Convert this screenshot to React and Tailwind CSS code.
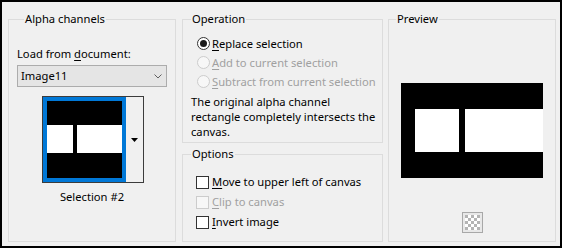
import React from 'react';

const Radio = ({ checked, disabled }) => (
  <span
    className={`w-[13px] h-[13px] rounded-full border flex items-center justify-center shrink-0 ${
      disabled ? 'border-[#cccccc] bg-[#f7f7f7]' : 'border-[#333333] bg-white'
    }`}
  >
    {checked && <span className="w-[7px] h-[7px] rounded-full bg-[#1a1a1a]" />}
  </span>
);

const Check = ({ disabled }) => (
  <span
    className={`w-[13px] h-[13px] border shrink-0 ${
      disabled ? 'border-[#cccccc] bg-[#f7f7f7]' : 'border-[#333333] bg-white'
    }`}
  />
);

const Acc = ({ children }) => <span className="underline underline-offset-[2px] decoration-1">{children}</span>;

const Legend = ({ children, ml = 'ml-[7px]' }) => (
  <legend className={`${ml} px-[1px] leading-[16px]`}>{children}</legend>
);

export default function App() {
  return (
    <div className="w-[562px] h-[248px] border-2 border-black bg-[#f0f0f0] flex pl-[6px] pt-[9px] font-['Noto_Sans',sans-serif] text-[11.2px] text-black whitespace-nowrap">
      {/* Alpha channels */}
      <fieldset className="w-[168px] h-[231px] border border-[#dcdcdc] px-[8px]">
        <Legend>Alpha channels</Legend>
        <div className="mt-[19px] leading-[16px]">
          Load from <Acc>d</Acc>ocument:
        </div>
        <div className="mt-[3px] w-[150px] h-[22px] border border-[#acacac] bg-[#e5e5e5] flex items-center justify-between pl-[3px] pr-[4px]">
          <span className="leading-[16px]">Image11</span>
          <svg width="8" height="5" viewBox="0 0 8 5">
            <polyline points="0.5,0.5 4,4 7.5,0.5" fill="none" stroke="#606060" strokeWidth="1" />
          </svg>
        </div>
        <div className="mt-[9px] ml-[25px] w-[102px] h-[87px] border border-[#3c3c3c] flex bg-white">
          <div className="w-[83px] h-[85px] border-4 border-[#0078d7] bg-black pt-[24px]">
            <div className="h-[28px] flex">
              <div className="w-[26px] bg-white" />
              <div className="w-[4px]" />
              <div className="flex-1 bg-white" />
            </div>
          </div>
          <div className="flex-1 bg-[#f0f0f0] flex items-center justify-center">
            <svg width="7" height="4" viewBox="0 0 7 4">
              <polygon points="0,0 7,0 3.5,4" fill="#000" />
            </svg>
          </div>
        </div>
        <div className="mt-[6px] text-center leading-[16px]">Selection #2</div>
      </fieldset>

      {/* Middle column */}
      <div className="ml-[6px] w-[201px] flex flex-col">
        <fieldset className="h-[132px] border border-[#dcdcdc]">
          <Legend ml="ml-[8px]">Operation</Legend>
          <div className="mt-[7px]">
            <div className="flex items-center h-[19px] pl-[14px] gap-[2px]">
              <Radio checked />
              <span className="leading-[16px]">
                <Acc>R</Acc>eplace selection
              </span>
            </div>
            <div className="flex items-center h-[19px] pl-[14px] gap-[2px] text-[#a0a0a0]">
              <Radio disabled />
              <span className="leading-[16px]">
                <Acc>A</Acc>dd to current selection
              </span>
            </div>
            <div className="flex items-center h-[19px] pl-[14px] gap-[2px] text-[#a0a0a0]">
              <Radio disabled />
              <span className="leading-[16px]">
                <Acc>S</Acc>ubtract from current selection
              </span>
            </div>
          </div>
          <p className="mt-[3px] pl-[8px] leading-[15px]">
            The original alpha channel
            <br />
            rectangle completely intersects the
            <br />
            canvas.
          </p>
        </fieldset>
        <fieldset className="mt-[3px] h-[96px] border border-[#dcdcdc]">
          <Legend ml="ml-[8px]">Options</Legend>
          <div className="mt-[10px]">
            <div className="flex items-center h-[20px] pl-[13px] gap-[3px]">
              <Check />
              <span className="leading-[16px]">
                <Acc>M</Acc>ove to upper left of canvas
              </span>
            </div>
            <div className="flex items-center h-[20px] pl-[13px] gap-[3px] text-[#a0a0a0]">
              <Check disabled />
              <span className="leading-[16px]">
                <Acc>C</Acc>lip to canvas
              </span>
            </div>
            <div className="flex items-center h-[20px] pl-[13px] gap-[3px]">
              <Check />
              <span className="leading-[16px]">
                <Acc>I</Acc>nvert image
              </span>
            </div>
          </div>
        </fieldset>
      </div>

      {/* Preview */}
      <fieldset className="ml-[5px] w-[168px] h-[231px] border border-[#dcdcdc]">
        <Legend>Preview</Legend>
        <div className="mt-[56px] ml-[12px] w-[142px] h-[95px] bg-black pt-[26px]">
          <div className="h-[43px] flex">
            <div className="ml-[14px] w-[44px] bg-white" />
            <div className="w-[6px]" />
            <div className="flex-1 bg-white" />
          </div>
        </div>
        <div className="mt-[34px] mx-auto w-[21px] h-[21px] border border-[#a8a8a8] bg-[#e8e8e8] flex items-center justify-center">
          <svg width="15" height="15" viewBox="0 0 15 15">
            <defs>
              <pattern id="chk" width="6" height="6" patternUnits="userSpaceOnUse">
                <rect width="6" height="6" fill="#ffffff" />
                <rect width="3" height="3" fill="#b4b4b4" />
                <rect x="3" y="3" width="3" height="3" fill="#b4b4b4" />
              </pattern>
            </defs>
            <rect width="15" height="15" fill="url(#chk)" />
          </svg>
        </div>
      </fieldset>
    </div>
  );
}
